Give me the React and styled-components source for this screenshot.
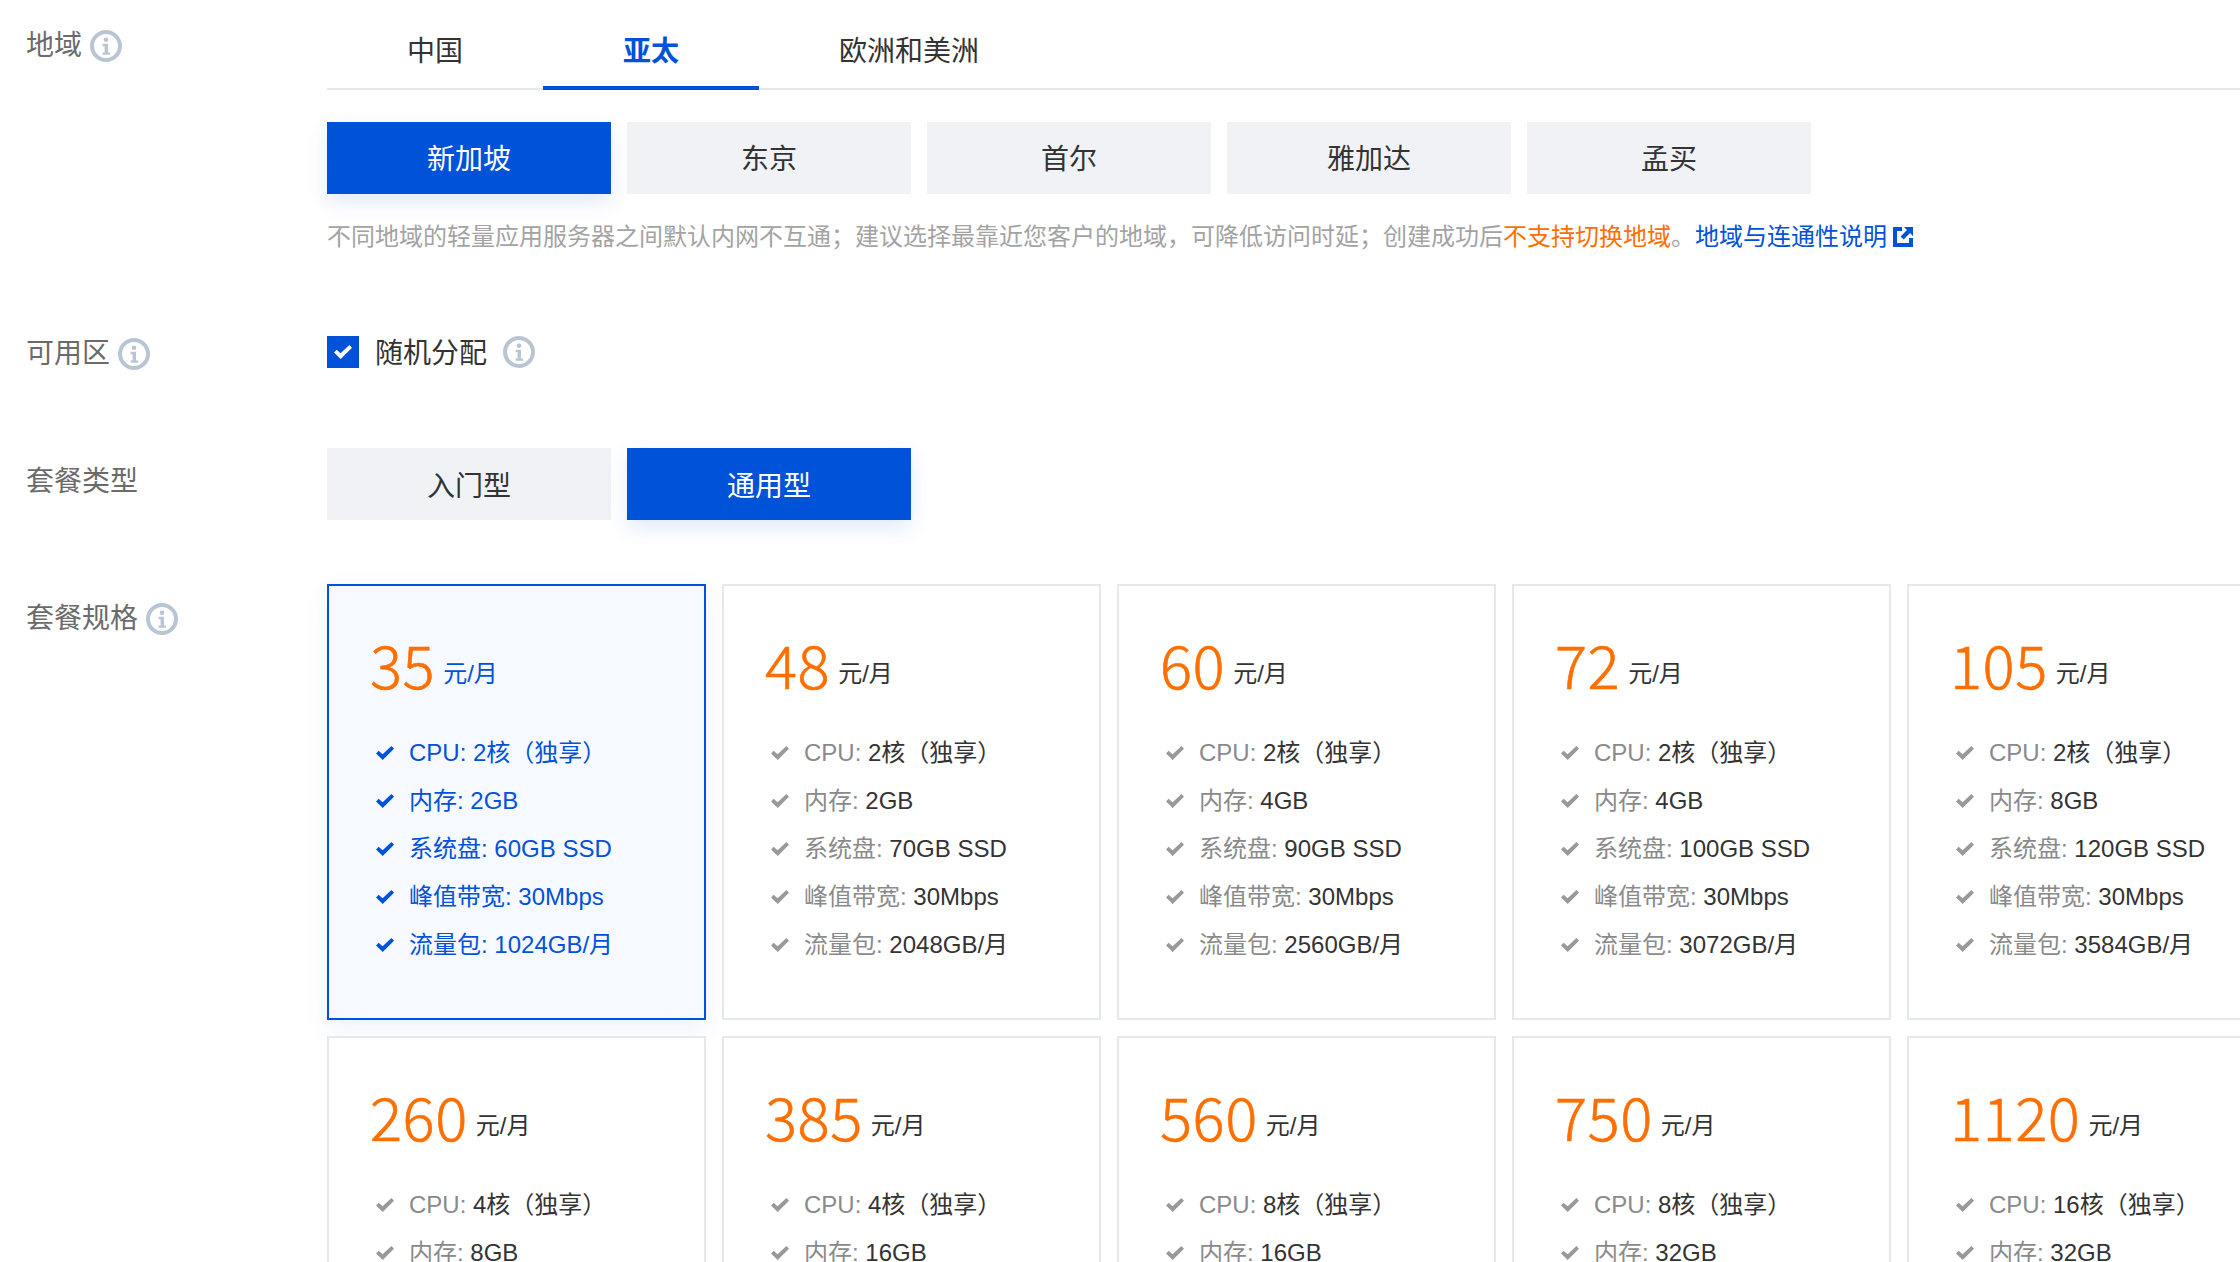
import React from "react";
import styled, { createGlobalStyle } from "styled-components";

const GlobalStyle = createGlobalStyle`
  html, body {
    margin: 0;
    padding: 0;
    width: 2240px;
    height: 1262px;
    overflow: hidden;
    background: #fff;
    font-family: "Liberation Sans", "Noto Sans CJK SC", sans-serif;
  }
`;

const BLUE = "#0052d9";
const ORANGE = "#ff6f00";

const Page = styled.div`
  padding-left: 26px;
  width: 2214px;
  height: 1262px;
  overflow: hidden;
`;

const FormRow = styled.div`
  display: grid;
  grid-template-columns: 301px 1fr;
  margin-bottom: ${(p) => p.$gap || 0}px;
`;

const Label = styled.div`
  display: flex;
  align-items: center;
  gap: 8px;
  height: 36px;
  margin-top: ${(p) => p.$top || 0}px;
  font-size: 28px;
  line-height: 36px;
  color: #6b6b6b;
`;

const Tabs = styled.div`
  display: flex;
  height: 88px;
  border-bottom: 2px solid #e5e8ed;
`;

const Tab = styled.div`
  height: 90px;
  box-sizing: border-box;
  padding: 32px 80px 0;
  font-size: 28px;
  line-height: 40px;
  color: ${(p) => (p.$active ? BLUE : "#333")};
  font-weight: ${(p) => (p.$active ? 700 : 400)};
  border-bottom: 4px solid ${(p) => (p.$active ? BLUE : "transparent")};
`;

const ButtonRow = styled.div`
  display: flex;
  gap: 16px;
  margin-top: ${(p) => p.$top || 0}px;
`;

const OptionButton = styled.div`
  width: 284px;
  height: 72px;
  box-sizing: border-box;
  padding-bottom: ${(p) => p.$lift || 0}px;
  display: flex;
  align-items: center;
  justify-content: center;
  font-size: 28px;
  color: ${(p) => (p.$active ? "#fff" : "#333")};
  background: ${(p) => (p.$active ? BLUE : "#f1f2f5")};
  box-shadow: ${(p) => (p.$active ? "0 8px 20px rgba(0, 82, 217, 0.12)" : "none")};
`;

const Hint = styled.div`
  margin-top: 25px;
  font-size: 24px;
  line-height: 36px;
  color: #a3a3a3;
  white-space: nowrap;
  display: flex;
  align-items: center;
`;

const Warn = styled.span`
  color: ${ORANGE};
`;

const HintLink = styled.span`
  color: ${BLUE};
  margin-right: 6px;
`;

const CheckRow = styled.div`
  display: flex;
  align-items: center;
  height: 32px;
  font-size: 28px;
  color: #333;
`;

const CheckBox = styled.span`
  width: 32px;
  height: 32px;
  background: ${BLUE};
  margin-right: 16px;
  display: flex;
  align-items: center;
  justify-content: center;
`;

const CheckText = styled.span`
  margin-right: 16px;
  padding-bottom: 2px;
`;

const CardGrid = styled.div`
  display: grid;
  grid-template-columns: repeat(5, 379px);
  gap: 16px;
`;

const Card = styled.div`
  height: 436px;
  box-sizing: border-box;
  padding: 47px 0 0 41px;
  border: 2px solid ${(p) => (p.$active ? BLUE : "#e5e8ed")};
  background: ${(p) => (p.$active ? "#f6f9ff" : "#fff")};
  box-shadow: ${(p) => (p.$active ? "0 8px 24px rgba(0, 82, 217, 0.08)" : "none")};
`;

const PriceLine = styled.div`
  display: flex;
  align-items: flex-end;
  gap: 8px;
  height: 60px;
`;

const Price = styled.span`
  font-family: "Noto Sans CJK SC", sans-serif;
  font-size: 60px;
  font-weight: 300;
  letter-spacing: 0.5px;
  line-height: 60px;
  color: ${ORANGE};
  -webkit-text-stroke: 0.6px ${ORANGE};
`;

const Unit = styled.span`
  font-size: 24px;
  line-height: 30px;
  margin-bottom: 4px;
  color: ${(p) => (p.$active ? BLUE : "#333")};
`;

const SpecList = styled.ul`
  list-style: none;
  margin: 36px 0 0;
  padding: 0 0 0 6px;
`;

const SpecRow = styled.li`
  display: flex;
  align-items: center;
  height: 48px;
  font-size: 24px;
  white-space: pre;
  color: ${(p) => (p.$active ? BLUE : "#333")};
`;

const SpecText = styled.span`
  padding-bottom: 5px;
`;

const SpecName = styled.span`
  color: ${(p) => (p.$active ? BLUE : "#8a8a8a")};
`;

const SpecCheck = styled.svg`
  width: 18px;
  height: 14px;
  margin-right: 15px;
  flex-shrink: 0;
`;

function InfoIcon() {
  return (
    <svg width="32" height="32" viewBox="0 0 32 32" fill="none">
      <circle cx="16" cy="16" r="14" stroke="#bac5d4" strokeWidth="4" />
      <circle cx="16" cy="9.8" r="2.3" fill="#bac5d4" />
      <path d="M12.6 13.8h5.4v8.6h2v2.4h-7.4v-2.4h2v-6.2h-2z" fill="#bac5d4" />
    </svg>
  );
}

function ExternalIcon() {
  return (
    <svg width="20" height="20" viewBox="0 0 20 20" fill={BLUE}>
      <path d="M0 0h9v4H4v12h12v-5h4v9H0z" />
      <path d="M11 0h9v9l-3-3-6.4 6.4-3-3L14 3z" />
    </svg>
  );
}

const plans = [
  { price: 35, specs: ["2核（独享）", "2GB", "60GB SSD", "30Mbps", "1024GB/月"], active: true },
  { price: 48, specs: ["2核（独享）", "2GB", "70GB SSD", "30Mbps", "2048GB/月"] },
  { price: 60, specs: ["2核（独享）", "4GB", "90GB SSD", "30Mbps", "2560GB/月"] },
  { price: 72, specs: ["2核（独享）", "4GB", "100GB SSD", "30Mbps", "3072GB/月"] },
  { price: 105, specs: ["2核（独享）", "8GB", "120GB SSD", "30Mbps", "3584GB/月"] },
  { price: 260, specs: ["4核（独享）", "8GB"] },
  { price: 385, specs: ["4核（独享）", "16GB"] },
  { price: 560, specs: ["8核（独享）", "16GB"] },
  { price: 750, specs: ["8核（独享）", "32GB"] },
  { price: 1120, specs: ["16核（独享）", "32GB"] },
];

const specNames = ["CPU", "内存", "系统盘", "峰值带宽", "流量包"];

function PlanCard({ plan }) {
  const active = plan.active;
  return (
    <Card $active={active}>
      <PriceLine>
        <Price>{plan.price}</Price>
        <Unit $active={active}>元/月</Unit>
      </PriceLine>
      <SpecList>
        {plan.specs.map((value, i) => (
          <SpecRow key={specNames[i]} $active={active}>
            <SpecCheck viewBox="0 0 18 14">
              <path
                d="M0 7.5L2.6 4.8 6.6 8.3 15.4 0 18 2.8 6.7 14z"
                fill={active ? BLUE : "#999"}
              />
            </SpecCheck>
            <SpecText>
              <SpecName $active={active}>{specNames[i]}: </SpecName>
              {value}
            </SpecText>
          </SpecRow>
        ))}
      </SpecList>
    </Card>
  );
}

export default function App() {
  return (
    <Page>
      <GlobalStyle />
      <FormRow $gap={81}>
        <Label $top={28}>
          地域 <InfoIcon />
        </Label>
        <div>
          <Tabs>
            <Tab>中国</Tab>
            <Tab $active>亚太</Tab>
            <Tab>欧洲和美洲</Tab>
          </Tabs>
          <ButtonRow $top={32}>
            <OptionButton $active $lift={3}>新加坡</OptionButton>
            <OptionButton $lift={3}>东京</OptionButton>
            <OptionButton $lift={3}>首尔</OptionButton>
            <OptionButton $lift={3}>雅加达</OptionButton>
            <OptionButton $lift={3}>孟买</OptionButton>
          </ButtonRow>
          <Hint>
            不同地域的轻量应用服务器之间默认内网不互通；建议选择最靠近您客户的地域，可降低访问时延；创建成功后
            <Warn>不支持切换地域</Warn>。<HintLink>地域与连通性说明</HintLink>
            <ExternalIcon />
          </Hint>
        </div>
      </FormRow>
      <FormRow $gap={76}>
        <Label>
          可用区 <InfoIcon />
        </Label>
        <CheckRow>
          <CheckBox>
            <svg width="18" height="14" viewBox="0 0 18 14">
              <path d="M0 7.5L2.6 4.8 6.6 8.3 15.4 0 18 2.8 6.7 14z" fill="#fff" />
            </svg>
          </CheckBox>
          <CheckText>随机分配</CheckText>
          <InfoIcon />
        </CheckRow>
      </FormRow>
      <FormRow $gap={64}>
        <Label $top={16}>套餐类型</Label>
        <ButtonRow>
          <OptionButton>入门型</OptionButton>
          <OptionButton $active>通用型</OptionButton>
        </ButtonRow>
      </FormRow>
      <FormRow>
        <Label $top={17}>
          套餐规格 <InfoIcon />
        </Label>
        <CardGrid>
          {plans.map((plan) => (
            <PlanCard key={plan.price} plan={plan} />
          ))}
        </CardGrid>
      </FormRow>
    </Page>
  );
}
